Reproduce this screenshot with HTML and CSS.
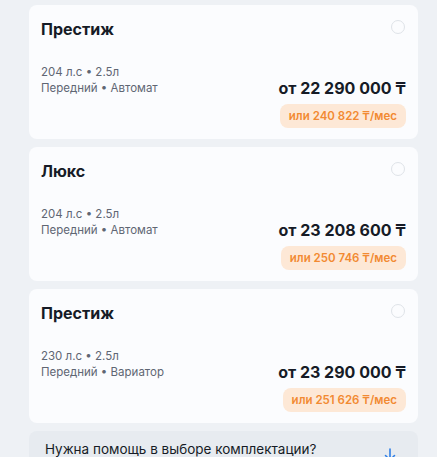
FILE: index.html
```html
<!DOCTYPE html>
<html lang="ru">
<head>
    <meta charset="UTF-8">
    <meta name="viewport" content="width=device-width, initial-scale=1.0">
    <title>Комплектации</title>
    <link rel="stylesheet" href="styles.css">
</head>
<body>
    <div class="list">
        <div class="card">
            <div class="card-head">
                <h2>Престиж</h2>
                <span class="radio"></span>
            </div>
            <div class="card-body">
                <div class="specs">
                    <div>204 л.с • 2.5л</div>
                    <div>Передний • Автомат</div>
                </div>
                <div class="prices">
                    <div class="price">от 22 290 000 ₸</div>
                    <div class="monthly">или 240 822 ₸/мес</div>
                </div>
            </div>
        </div>

        <div class="card">
            <div class="card-head">
                <h2>Люкс</h2>
                <span class="radio"></span>
            </div>
            <div class="card-body">
                <div class="specs">
                    <div>204 л.с • 2.5л</div>
                    <div>Передний • Автомат</div>
                </div>
                <div class="prices">
                    <div class="price">от 23 208 600 ₸</div>
                    <div class="monthly">или 250 746 ₸/мес</div>
                </div>
            </div>
        </div>

        <div class="card">
            <div class="card-head">
                <h2>Престиж</h2>
                <span class="radio"></span>
            </div>
            <div class="card-body">
                <div class="specs">
                    <div>230 л.с • 2.5л</div>
                    <div>Передний • Вариатор</div>
                </div>
                <div class="prices">
                    <div class="price">от 23 290 000 ₸</div>
                    <div class="monthly">или 251 626 ₸/мес</div>
                </div>
            </div>
        </div>

        <div class="help">
            <span>Нужна помощь в выборе комплектации?</span>
            <svg class="help-icon" width="16" height="16" viewBox="0 0 16 16" fill="none">
                <path d="M8 1v11M3.5 7.5L8 12l4.5-4.5M2 15h12" stroke="#2f7fe6" stroke-width="1.6" stroke-linecap="round" stroke-linejoin="round"/>
            </svg>
        </div>
    </div>
</body>
</html>
```

FILE: styles.css
```css
body {
    margin: 0;
    background-color: #eef1f5;
    font-family: Inter, "Noto Sans", sans-serif;
    color: #161b26;
}
.list {
    display: flex;
    flex-direction: column;
    gap: 8px;
    width: 389px;
    padding: 5px 0 0 29px;
}
.card {
    background: #fbfcfe;
    border-radius: 8px;
    padding: 12px 13px 11px 12px;
}
.card-head {
    display: flex;
    justify-content: space-between;
    align-items: center;
    height: 24px;
}
.card-head h2 {
    margin: 0;
    font-size: 16px;
    font-weight: 700;
    line-height: 24px;
}
.radio {
    width: 12px;
    height: 12px;
    border: 1.5px solid #dfe3e8;
    border-radius: 50%;
    margin-top: -4px;
}
.card-body {
    display: flex;
    justify-content: space-between;
    margin-top: 23px;
}
.specs {
    font-size: 11.5px;
    line-height: 16px;
    color: #5f6673;
}
.prices {
    display: flex;
    flex-direction: column;
    align-items: flex-end;
    gap: 6px;
    margin-top: 14px;
    margin-right: -1px;
}
.price {
    font-size: 16px;
    font-weight: 700;
    line-height: 20px;
}
.monthly {
    background: #fde8d6;
    color: #f28a32;
    font-size: 11.5px;
    font-weight: 600;
    line-height: 24px;
    padding: 0 9px;
    border-radius: 8px;
}
.help {
    display: flex;
    justify-content: space-between;
    align-items: flex-start;
    background: #e7ebf0;
    border-radius: 8px;
    padding: 8px 20px 12px 16px;
    font-size: 13.5px;
    line-height: 20px;
}
.help-icon {
    margin-top: 9px;
}
```
